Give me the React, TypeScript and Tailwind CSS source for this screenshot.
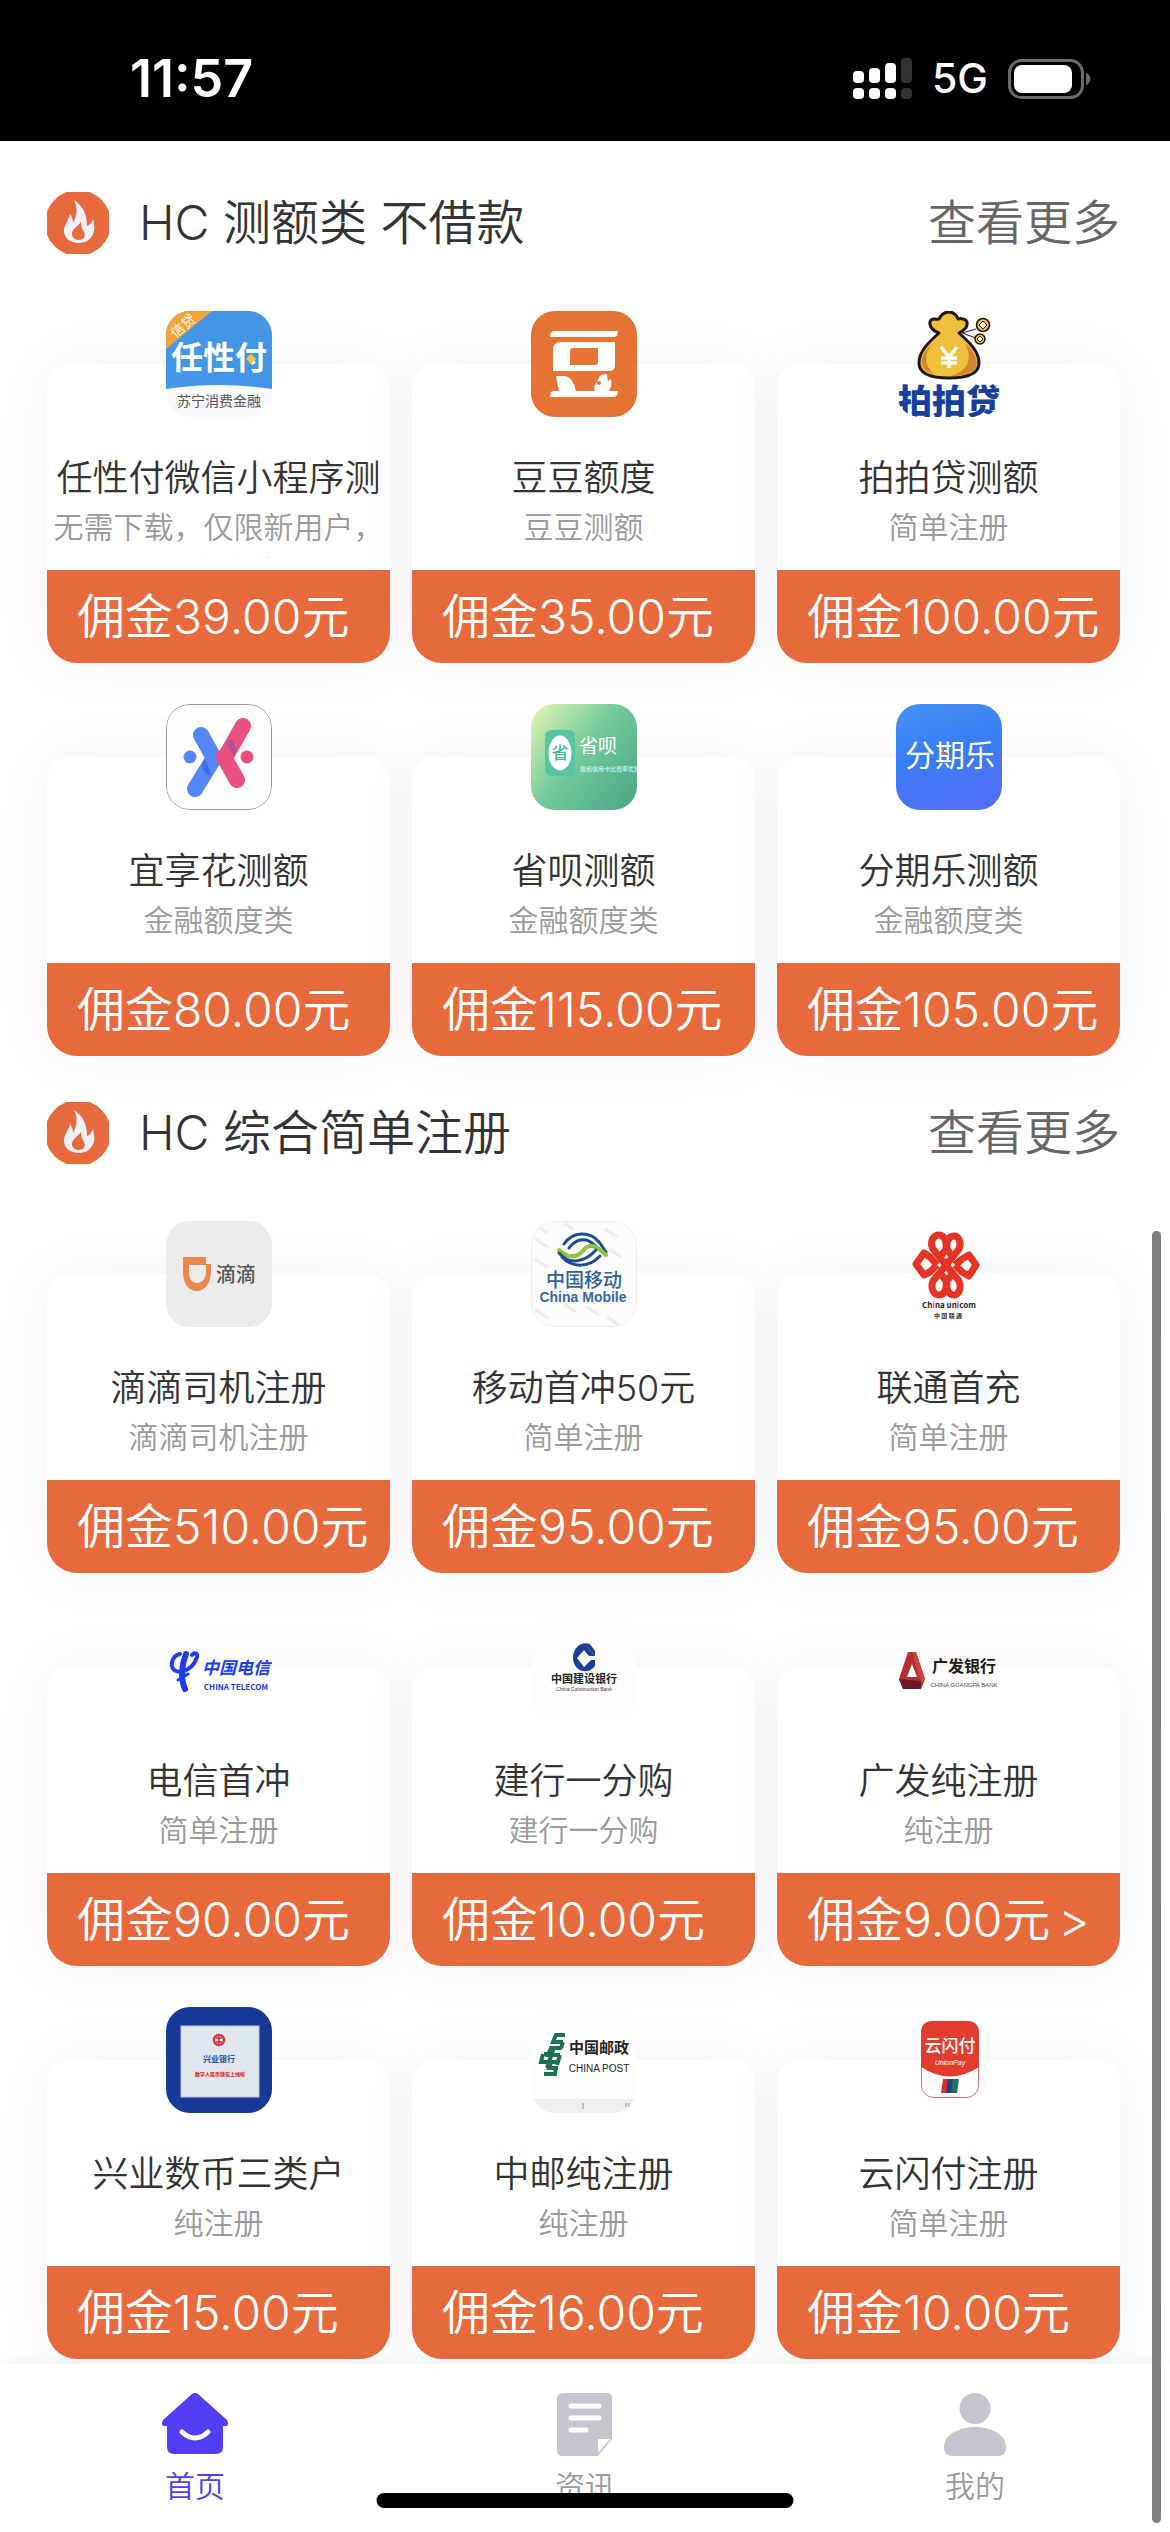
import React from 'react';

type Product = {
  name: string;
  desc: string;
  price: string;
  logo: React.ReactNode;
  arrow?: boolean;
};

type Section = {
  title: string;
  items: Product[];
};

const CJK = "'Noto Sans CJK SC', sans-serif";

function Tile({ children }: { children: React.ReactNode }) {
  return (
    <svg viewBox="0 0 106 106" className="size-full" fontFamily={CJK} aria-hidden="true">
      {children}
    </svg>
  );
}

const RenxingfuLogo = (
  <Tile>
    <rect width="106" height="106" fill="#f9f9f9" />
    <path d="M0 0H106V78Q53 70 0 78Z" fill="#4395e5" />
    <path d="M0 0H46L0 38Z" fill="#f2a43b" />
    <text x="17" y="20" fontSize="14" fill="#fff" textAnchor="middle" transform="rotate(-40 17 15)">信贷</text>
    <text x="53" y="58" fontSize="32" fontWeight="700" fill="#fff" textAnchor="middle">任性付</text>
    <path d="M85 43l5 5-5 5-5-5z" fill="#f5cb3c" />
    <text x="53" y="95" fontSize="14" fontWeight="400" fill="#555" textAnchor="middle">苏宁消费金融</text>
  </Tile>
);

const DoudouLogo = (
  <Tile>
    <rect width="106" height="106" fill="#e57334" />
    <g fill="#fff">
      <path d="M23 20H87Q87 26 83 26H19Q19 20 23 20Z" />
      <path fillRule="evenodd" d="M30 31H84V54Q84 60 78 60H22V39Q22 31 30 31ZM42 37Q39 37 39 40V54H64Q67 54 67 51V37Z" />
      <path d="M25 65H34Q42 66 45 80H64C62 74 65 72 67 70C67 66 70 63 75 63C77 64 76 67 77 70L80 68C81 73 80 77 78 80H87Q87 86 82 86H19Q19 80 22 80H28Z" />
    </g>
    <circle cx="68" cy="72" r="2" fill="#e57334" />
  </Tile>
);

const PaipaidaiLogo = (
  <Tile>
    <path d="M66 22L80 18M66 22L80 27" stroke="#333" strokeWidth="1.2" />
    <path
      d="M43 22C35 19 32 13 35 9C38 7 42 9 43 8C45 4 49 1 53 1C57 1 61 4 62 8C65 7 70 8 71 11C72 16 67 20 63 22C73 31 83 40 83 52C83 62 73 67 53 67C33 67 23 62 23 52C23 40 33 31 43 22Z"
      fill="#efbf3e"
      stroke="#211815"
      strokeWidth="3"
      strokeLinejoin="round"
    />
    <path d="M69 32C80 42 82 50 80 56C77 63 65 65 55 65C72 60 77 48 69 32Z" fill="#d3842e" />
    <path d="M36 33C26 42 24 50 27 56C29 60 34 62 38 63C27 53 29 43 36 33Z" fill="#d3842e" />
    <path d="M45 36L53 46L61 36M53 46V57M45 47H61M45 52H61" stroke="#fff" strokeWidth="3.4" fill="none" />
    <circle cx="87" cy="14" r="6.5" fill="#efbf3e" stroke="#211815" strokeWidth="1.6" />
    <path d="M87 10l4 4-4 4-4-4z" fill="#fff" stroke="#211815" />
    <circle cx="84" cy="28" r="5" fill="#efbf3e" stroke="#211815" strokeWidth="1.6" />
    <path d="M84 25l3 3-3 3-3-3z" fill="#fff" stroke="#211815" />
    <text x="53" y="103" fontSize="34" fontWeight="900" fill="#17409c" textAnchor="middle">拍拍贷</text>
  </Tile>
);

const YixianghuaLogo = (
  <Tile>
    <rect x="0.5" y="0.5" width="105" height="105" rx="23" fill="#fdfdfd" stroke="#999" />
    <g strokeWidth="16" strokeLinecap="round" strokeLinejoin="round" fill="none">
      <path d="M35 31L48 54" stroke="#5487f5" />
      <path d="M48 54L29 85" stroke="#5487f5" />
      <path d="M60 52L77 22" stroke="#e9507f" />
      <path d="M58 53L71 76" stroke="#e9507f" />
    </g>
    <path d="M39 55L46 72L40 70L35 62Z" fill="#3c57dc" opacity=".6" />
    <path d="M60 39L68 52L71 44L65 35Z" fill="#9c4fae" opacity=".7" />
    <circle cx="24" cy="53" r="6.5" fill="#5487f5" />
    <circle cx="81" cy="53" r="6.5" fill="#e9507f" />
  </Tile>
);

const ShengbeiLogo = (
  <Tile>
    <defs>
      <linearGradient id="shengbei" x1="0" y1="0" x2="1" y2="0.8">
        <stop offset="0" stopColor="#e6f7b3" />
        <stop offset="0.5" stopColor="#74cb9b" />
        <stop offset="1" stopColor="#4dab88" />
      </linearGradient>
    </defs>
    <rect width="106" height="106" fill="url(#shengbei)" />
    <rect x="14" y="26" width="30" height="46" rx="6" fill="#56c5a4" />
    <ellipse cx="29" cy="49" rx="11.5" ry="17.5" fill="#fff" />
    <text x="29" y="55" fontSize="17" fontWeight="500" fill="#44b795" textAnchor="middle">省</text>
    <text x="48" y="49" fontSize="19" fontWeight="400" fill="#fff">省呗</text>
    <text x="49" y="67" fontSize="6" fontWeight="400" fill="#e5f7ee">敢和信用卡比费率优惠</text>
  </Tile>
);

const FenqileLogo = (
  <Tile>
    <defs>
      <linearGradient id="fenqile" x1="0.2" y1="0" x2="0.5" y2="1">
        <stop offset="0" stopColor="#4290f4" />
        <stop offset="0.5" stopColor="#397cf6" />
        <stop offset="1" stopColor="#5070f5" />
      </linearGradient>
    </defs>
    <rect width="106" height="106" fill="url(#fenqile)" />
    <text x="54" y="62" fontSize="30" fontWeight="400" fill="#fff" textAnchor="middle">分期乐</text>
    <path d="M47 43V50H52" stroke="#f0606a" strokeWidth="2" fill="none" />
  </Tile>
);

const DidiLogo = (
  <Tile>
    <rect width="106" height="106" fill="#ececec" />
    <path fillRule="evenodd" d="M17 36H40V43H45V50C45 62 39 70 31 70C22 70 17 62 17 51ZM23 44V51C23 58 26 62 31 62C36 62 40 58 40 51V44Z" fill="#ec864f" />
    <text x="70" y="61" fontSize="20" fontWeight="500" fill="#555" textAnchor="middle">滴滴</text>
  </Tile>
);

const MobileLogo = (
  <Tile>
    <rect x="0.5" y="0.5" width="105" height="105" rx="23" fill="#fcfcfc" stroke="#ececec" />
    <path
      d="M8 6l9 6M33 2l9 6M74 8l12 8M4 18l13 8M78 28l12 8M4 38l13 8M4 88l13 9M33 83l12 8M56 86l12 8M76 96l12 8"
      stroke="#ececec"
      strokeWidth="3"
    />
    <g fill="none" strokeWidth="3" strokeLinecap="round">
      <path d="M33 23C42 10 59 10 68 21L75 31" stroke="#1d4b93" />
      <path d="M38 27C47 15 58 18 63 24L74 33" stroke="#1d4b93" />
      <path d="M28 29C38 38 46 36 52 30C58 22 65 24 75 34" stroke="#8fc43f" strokeWidth="4" />
      <path d="M28 32C38 44 53 42 65 29" stroke="#1d4b93" />
      <path d="M31 36C41 47 58 47 69 35" stroke="#1d4b93" />
    </g>
    <text x="53" y="66" fontSize="19" fontWeight="500" fill="#2f5f9f" textAnchor="middle">中国移动</text>
    <text x="52" y="81" fontSize="14" fontWeight="700" fontFamily="'Liberation Sans', sans-serif" fill="#3a68a5" textAnchor="middle">China Mobile</text>
  </Tile>
);

const UnicomLogo = (
  <Tile>
    <g fill="none" stroke="#e63323" strokeWidth="7" strokeLinejoin="round">
      <path d="M50 44L37 28C33 20 38 14 43 14C49 14 51 22 50 28L43 38" />
      <path d="M50 44L63 28C66 20 62 15 58 15C52 15 50 22 51 28L58 38" />
      <path d="M50 44L37 60C34 68 38 74 43 74C49 74 51 67 50 60L43 50" />
      <path d="M50 44L63 60C66 68 62 74 58 74C52 74 50 67 51 60L58 50" />
      <path d="M41 44L34 36L28 32L20 43L28 54L34 51L41 44" />
      <path d="M59 44L66 38L73 34L80 44L73 55L66 51L59 44" />
    </g>
    <text x="53" y="87" fontSize="8" fontWeight="700" fill="#222" textAnchor="middle">
      Ch<tspan fill="#e63323">i</tspan>na un<tspan fill="#e63323">i</tspan>com
    </text>
    <text x="52" y="97" fontSize="6" fontWeight="700" fill="#333" textAnchor="middle">中 国 联 通</text>
  </Tile>
);

const TelecomLogo = (
  <Tile>
    <g fill="none" stroke="#1d3cf0" strokeLinecap="round">
      <path d="M14 40C5 42 3 54 10 57C18 60 28 53 31 43C32 39 28 38 26 41" strokeWidth="4" />
      <path d="M20 40C16 50 14 64 19 75" strokeWidth="6" />
      <path d="M12 66L22 60" strokeWidth="3" />
    </g>
    <text x="70" y="60" fontSize="17" fontWeight="700" fontStyle="italic" fill="#1d3cf0" textAnchor="middle">中国电信</text>
    <text x="70" y="76" fontSize="8" fontWeight="700" fill="#1d3cf0" textAnchor="middle">CHINA TELECOM</text>
  </Tile>
);

const CcbLogo = (
  <Tile>
    <rect width="106" height="106" fill="#fdfdfb" />
    <path
      fillRule="evenodd"
      d="M59 30C51 27 42 33 42 44C42 57 57 62 64 52V46H60L53 53L46 44L53 36L58 42H64L56 33Z"
      fill="#1c3f96"
    />
    <path d="M59 30L64 37V42L55 32Z" fill="#1c3f96" />
    <text x="53" y="69" fontSize="11" fontWeight="700" fill="#222" textAnchor="middle">中国建设银行</text>
    <text x="53" y="77" fontSize="5" fontFamily="'Liberation Sans', sans-serif" fill="#333" textAnchor="middle">China Construction Bank</text>
  </Tile>
);

const GuangfaLogo = (
  <Tile>
    <path d="M12 38H20L29 65L25 75H7L3 65Z" fill="#b52e31" />
    <path d="M16 38H20L29 65L25 69Z" fill="#d0433c" />
    <path d="M3 65L25 67L25 75H7Z" fill="#6b1a20" />
    <path d="M16 50L21 63H11Z" fill="#fff" />
    <text x="68" y="58" fontSize="16" fontWeight="700" fill="#231815" textAnchor="middle">广发银行</text>
    <text x="68" y="73" fontSize="6" fontFamily="'Liberation Sans', sans-serif" fill="#444" textAnchor="middle">CHINA GUANGFA BANK</text>
  </Tile>
);

const XingyeLogo = (
  <Tile>
    <rect width="106" height="106" fill="#183a96" />
    <rect x="15" y="19" width="78" height="71" fill="#e0e6ee" stroke="#b9c6dd" />
    <circle cx="53" cy="33" r="5" fill="none" stroke="#d9353c" strokeWidth="2.5" />
    <path d="M53 28V38M50 31H56M50 35H56" stroke="#d9353c" strokeWidth="1.5" />
    <text x="53" y="55" fontSize="8" fontWeight="700" fill="#2b4fa5" textAnchor="middle">兴业银行</text>
    <text x="54" y="69" fontSize="5" fontWeight="900" fill="#e0352f" textAnchor="middle">数字人民币钱包上线啦</text>
  </Tile>
);

const PostLogo = (
  <Tile>
    <rect width="106" height="106" fill="#fdfdfd" />
    <rect y="92" width="106" height="14" fill="#efefef" />
    <path d="M52 96v6M95 96v4M98 96v4" stroke="#bbb" strokeWidth="2" />
    <g fill="none" stroke="#1e7150" strokeWidth="4">
      <path d="M34 28H25L22 35H32M32 35L30 41M31 41H20L17 48H29M29 48L26 58M13 47H19M12 47L10 55H28M20 55L18 61H27M25 61L24 67H13" />
      <path d="M23 40L16 61" />
    </g>
    <text x="68" y="46" fontSize="15" fontWeight="700" fill="#2a2320" textAnchor="middle">中国邮政</text>
    <text x="68" y="65" fontSize="10" fontFamily="'Liberation Sans', sans-serif" fill="#2a2320" textAnchor="middle">CHINA POST</text>
  </Tile>
);

const UnionPayLogo = (
  <Tile>
    <rect x="25.5" y="14.5" width="57" height="76" rx="12" fill="#fff" stroke="#dc6a62" />
    <path d="M25 60V26Q25 14 37 14H71Q83 14 83 26V60Q54 79 25 60Z" fill="#e23c2e" />
    <text x="54" y="45" fontSize="17" fontWeight="500" fill="#fff" textAnchor="middle">云闪付</text>
    <text x="54" y="58" fontSize="7" fontStyle="italic" fontFamily="'Liberation Sans', sans-serif" fill="#fff" textAnchor="middle">UnionPay</text>
    <path d="M47 72H53L51 86H45Z" fill="#d9302c" />
    <path d="M52 72H58L56 86H50Z" fill="#1f3f86" />
    <path d="M57 72H63L61 86H55Z" fill="#1f7268" />
  </Tile>
);

const sections: Section[] = [
  {
    title: 'HC 测额类 不借款',
    items: [
      { name: '任性付微信小程序测', desc: '无需下载，仅限新用户，方便安全获额', price: '39.00', logo: RenxingfuLogo },
      { name: '豆豆额度', desc: '豆豆测额', price: '35.00', logo: DoudouLogo },
      { name: '拍拍贷测额', desc: '简单注册', price: '100.00', logo: PaipaidaiLogo },
      { name: '宜享花测额', desc: '金融额度类', price: '80.00', logo: YixianghuaLogo },
      { name: '省呗测额', desc: '金融额度类', price: '115.00', logo: ShengbeiLogo },
      { name: '分期乐测额', desc: '金融额度类', price: '105.00', logo: FenqileLogo },
    ],
  },
  {
    title: 'HC 综合简单注册',
    items: [
      { name: '滴滴司机注册', desc: '滴滴司机注册', price: '510.00', logo: DidiLogo },
      { name: '移动首冲50元', desc: '简单注册', price: '95.00', logo: MobileLogo },
      { name: '联通首充', desc: '简单注册', price: '95.00', logo: UnicomLogo },
      { name: '电信首冲', desc: '简单注册', price: '90.00', logo: TelecomLogo },
      { name: '建行一分购', desc: '建行一分购', price: '10.00', logo: CcbLogo },
      { name: '广发纯注册', desc: '纯注册', price: '9.00', logo: GuangfaLogo, arrow: true },
      { name: '兴业数币三类户', desc: '纯注册', price: '15.00', logo: XingyeLogo },
      { name: '中邮纯注册', desc: '纯注册', price: '16.00', logo: PostLogo },
      { name: '云闪付注册', desc: '简单注册', price: '10.00', logo: UnionPayLogo },
    ],
  },
];

function StatusBar() {
  return (
    <div className="flex h-[141px] items-center justify-between bg-black pt-4 pr-[79px] pl-[130px] text-white">
      <span className="text-[52px] leading-none font-semibold">11:57</span>
      <div className="flex items-center gap-5">
        <svg width="59" height="42" viewBox="0 0 59 42" fill="#fff" aria-hidden="true">
          <rect x="0" y="13" width="11" height="12" rx="4" />
          <rect x="16" y="10" width="11" height="15" rx="4" />
          <rect x="32" y="5" width="11" height="20" rx="4" />
          <rect x="48" y="0" width="11" height="25" rx="4" fill="#333" />
          <rect x="0" y="30" width="11" height="11" rx="4" />
          <rect x="16" y="30" width="11" height="11" rx="4" />
          <rect x="32" y="30" width="11" height="11" rx="4" />
          <rect x="48" y="30" width="11" height="11" rx="4" fill="#333" />
        </svg>
        <span className="text-[41px] leading-none font-medium">5G</span>
        <svg width="83" height="40" viewBox="0 0 83 40" aria-hidden="true">
          <rect x="1.5" y="1.5" width="73" height="37" rx="12" fill="none" stroke="#6b6b6b" strokeWidth="3" />
          <rect x="6" y="6" width="58" height="28" rx="8" fill="#fff" />
          <path d="M78 14C84 16 84 24 78 26Z" fill="#6b6b6b" />
        </svg>
      </div>
    </div>
  );
}

function FlameIcon() {
  return (
    <svg viewBox="0 0 62 62" className="size-[62px]" aria-hidden="true">
      <circle cx="31" cy="31" r="33" fill="#e66a3c" />
      <path
        d="M27 8C36 14 40 22 40 34C43 33 45 30 46 27C47 33 49 38 45 44C42 49 37 51 32 51C23 51 17 46 17 39C17 32 22 28 23 22C25 25 26 27 26 31C30 24 31 16 27 8Z"
        fill="#f1effc"
      />
      <path d="M34 30C30 35 24 38 25 43C26 47 29 48 32 48C37 48 39 44 37 40C35 37 34 34 34 30Z" fill="#e66a3c" />
    </svg>
  );
}

function ProductCard({ item }: { item: Product }) {
  return (
    <a href="#" className="flex flex-col items-center rounded-[22px] bg-white shadow-[0_0_60px_rgba(0,0,0,0.05)]">
      <div className="-mt-[53px] size-[106px] overflow-hidden rounded-[24px]">{item.logo}</div>
      <h3 className="mt-9 text-[36px] leading-[50px] whitespace-nowrap text-[#333]">{item.name}</h3>
      <p className="mt-0.5 h-[53px] w-full overflow-hidden px-1 text-center text-[30px] leading-[45px] text-[#999]">
        {item.desc}
      </p>
      <div className="mt-3 flex h-[93px] w-full items-center gap-2 rounded-b-[30px] bg-[#e66a3c] pl-[30px] text-[48px] whitespace-nowrap text-white">
        <span>佣金{item.price}元</span>
        {item.arrow && <span>&gt;</span>}
      </div>
    </a>
  );
}

function TabBar() {
  return (
    <nav className="relative mt-1 grid h-[168px] grid-cols-3 bg-white text-[30px] leading-[44px] text-[#999] shadow-[0_0_20px_rgba(0,0,0,0.06)]">
      <a href="#" className="flex flex-col items-center gap-2 pt-[29px] text-[#523df5]">
        <svg width="68" height="63" viewBox="0 0 68 63" aria-hidden="true">
          <path
            d="M31 1Q34-1 37 1L66 27Q69 33 64 33H62V54Q62 61 55 61H13Q6 61 6 54V33H4Q-1 33 2 27Z"
            fill="#523df5"
          />
          <path d="M21 39Q34 51 47 39" stroke="#fff" strokeWidth="5" strokeLinecap="round" fill="none" />
        </svg>
        首页
      </a>
      <a href="#" className="flex flex-col items-center gap-2 pt-[29px]">
        <svg width="56" height="63" viewBox="0 0 56 63" aria-hidden="true">
          <path d="M6 0H50Q55 0 55 5V46L41 63H6Q0 63 0 57V6Q0 0 6 0Z" fill="#c5c5cf" />
          <path d="M41 47Q41 46 42 46H53L41 60Z" fill="#fff" />
          <path d="M14 13H42M14 25H42M14 37H29" stroke="#fff" strokeWidth="5" strokeLinecap="round" />
        </svg>
        资讯
      </a>
      <a href="#" className="flex flex-col items-center gap-2 pt-[29px]">
        <svg width="62" height="63" viewBox="0 0 62 63" fill="#c5c5cf" aria-hidden="true">
          <circle cx="31" cy="15.5" r="15.5" />
          <path d="M31 34C46 34 62 41 62 54Q62 63 54 63H8Q0 63 0 54C0 41 16 34 31 34Z" />
        </svg>
        我的
      </a>
      {/* home indicator */}
      <div className="absolute bottom-6 left-1/2 h-[15px] w-[417px] -translate-x-1/2 rounded-full bg-black" />
    </nav>
  );
}

export default function App() {
  return (
    <div className="relative flex min-h-screen flex-col overflow-hidden bg-white font-['Inter','Noto_Sans_CJK_SC',sans-serif] font-[350]">
      <StatusBar />
      <main className="flex flex-1 flex-col gap-[46px] pt-[51px] pr-[50px] pl-[47px]">
        {sections.map((section) => (
          <section key={section.title}>
            <header className="flex h-[62px] items-center text-[48px]">
              <FlameIcon />
              <h2 className="ml-[30px] whitespace-nowrap text-[#333]">{section.title}</h2>
              <a href="#" className="ml-auto text-[#666]">查看更多</a>
            </header>
            <div className="mt-[110px] grid grid-cols-3 gap-x-[22px] gap-y-[94px]">
              {section.items.map((item) => (
                <ProductCard key={item.name} item={item} />
              ))}
            </div>
          </section>
        ))}
      </main>
      <TabBar />
      {/* scroll thumb */}
      <div className="absolute right-[9px] bottom-[9px] h-[1292px] w-[9px] rounded-full bg-[#7f7f7f]" />
    </div>
  );
}
